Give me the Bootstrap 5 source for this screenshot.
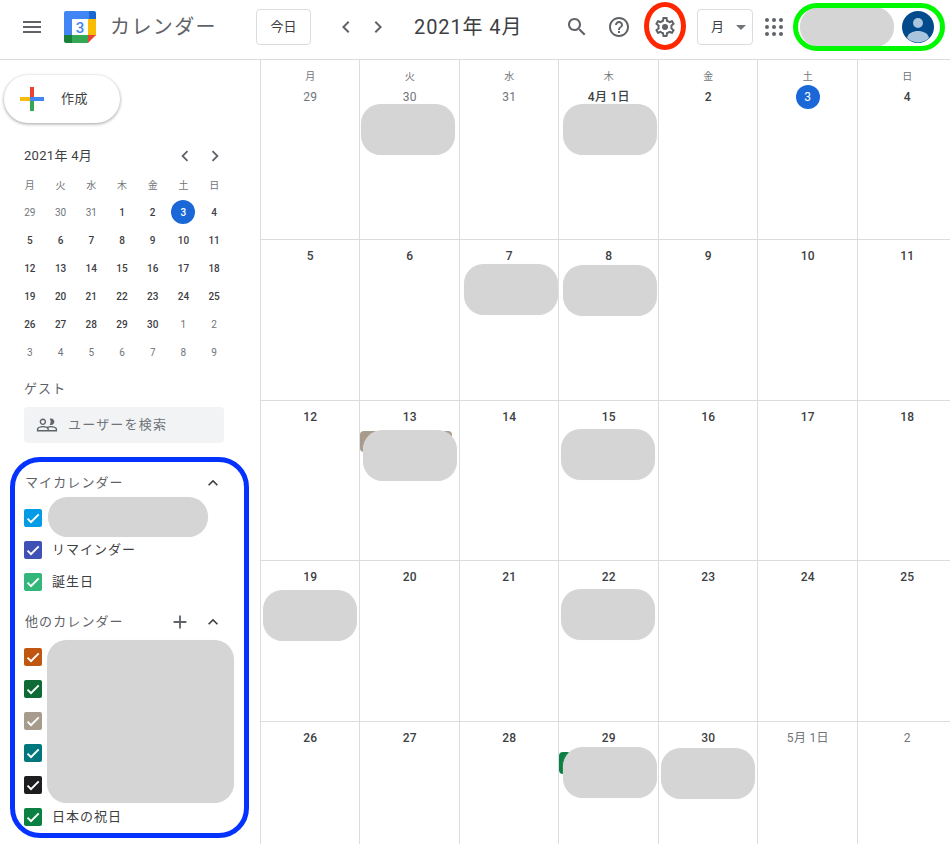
<!DOCTYPE html>
<html lang="ja">
<head>
    <meta charset="UTF-8">
    <meta name="viewport" content="width=device-width, initial-scale=1.0">
    <title>カレンダー</title>
    <link href="https://cdn.jsdelivr.net/npm/bootstrap@5.3.3/dist/css/bootstrap.min.css" rel="stylesheet">
    <style>
        html, body { height: 844px; overflow: hidden; }
        body { font-family: Roboto, "Noto Sans CJK JP", sans-serif; color: #3c4043; background: #fff; }
        .page-wrap { position: relative; width: 950px; height: 844px; overflow: hidden; }

        .top-bar { height: 60px; border-bottom: 1px solid #dadce0; padding-bottom: 5px; }
        .ico { fill: #5f6368; display: block; flex: none; }
        .menu-ico { margin-left: 20px; }
        .app-logo { margin-left: 20px; flex: none; }
        .app-title { font-size: 20px; line-height: 28px; color: #5f6368; width: 110px; margin-left: 14px; letter-spacing: 1.4px; white-space: nowrap; }
        .today-btn { width: 55px; height: 36px; margin-left: 36px; border: 1px solid #dadce0; border-radius: 4px; font-size: 13px; color: #3c4043; display: flex; align-items: center; justify-content: center; }
        .nav-pair { margin-left: 23px; gap: 8px; }
        .month-title { font-size: 20px; line-height: 28px; margin-left: 24px; width: 151px; white-space: nowrap; letter-spacing: .9px; }
        .help-ico { margin-left: 18px; }
        .gear-ico { margin-left: 22px; }
        .view-btn { width: 56px; height: 36px; margin-left: 20px; border: 1px solid #dadce0; border-radius: 4px; font-size: 13px; padding-left: 13px; }
        .caret-down { width: 0; height: 0; border-left: 5px solid transparent; border-right: 5px solid transparent; border-top: 5px solid #70757a; margin-left: 12px; }
        .dots-grid { width: 16px; display: grid; grid-template-columns: repeat(3, 4px); gap: 3px; margin-left: 12px; }
        .dots-grid i { width: 4px; height: 4px; background: #5f6368; border-radius: 50%; display: block; }
        .avatar-ico { position: absolute; left: 902px; top: 11px; }

        .side-pane { width: 259.6px; flex: none; }
        .create-btn { width: 116px; height: 48px; margin: 15px 0 0 4px; border-radius: 24px; background: #fff; box-shadow: 0 1px 3px rgba(60,64,67,.35), 0 1px 3px 1px rgba(60,64,67,.12); font-size: 13px; padding-left: 16px; gap: 17px; letter-spacing: .4px; }
        .mini-head { margin: 19px 0 0 24px; width: 202px; height: 28px; font-size: 13px; letter-spacing: .3px; }
        .mini-grid { margin: 2px 0 0 14.5px; width: 215px; display: grid; grid-template-columns: repeat(7, 1fr); grid-template-rows: 26px; grid-auto-rows: 28px; font-size: 10px; font-weight: 500; text-align: center; }
        .mini-grid span { display: flex; align-items: center; justify-content: center; }
        .mini-grid .wk { font-weight: 400; color: #70757a; }
        .mini-grid .dim { font-weight: 400; color: #70757a; }
        .day-dot { width: 24px; height: 24px; border-radius: 50%; background: #1a67d8; color: #fff; }
        .side-label { font-size: 13px; line-height: 20px; color: #5f6368; letter-spacing: 1.1px; }
        .guest-lbl { margin: 13px 0 0 24px; }
        .guest-box { width: 200px; height: 36px; margin: 8px 0 0 24px; background: #f1f3f4; border-radius: 4px; padding-left: 12px; gap: 10px; font-size: 13px; color: #70757a; letter-spacing: 1.2px; }
        .cal-head { height: 24px; margin-left: 25px; width: 198px; }
        .my-head { margin-top: 28px; }
        .other-head { margin-top: 12px; }
        .cal-list { margin-top: 7px; }
        .cal-row { height: 32px; margin-left: 24px; gap: 10px; font-size: 13px; color: #3c4043; letter-spacing: 1px; }
        .chk { width: 18px; height: 18px; border-radius: 2px; flex: none; display: flex; align-items: center; justify-content: center; }
        .chevron-up { fill: #3c4043; }
        .plus-ico { margin-right: 12px; }

        .month-grid { display: grid; grid-template-columns: repeat(7, 99.5px); grid-template-rows: 180px 161px 160px 161px 124px; width: 697px; flex: none; }
        .day-cell { border-left: 1px solid #dadce0; border-bottom: 1px solid #dadce0; text-align: center; font-size: 12px; font-weight: 500; color: #3c4043; padding: 4px 0 0 1px; letter-spacing: .3px; }
        .day-cell.first-week { padding-top: 8px; }
        .wk-name { font-size: 10px; font-weight: 400; line-height: 16px; color: #70757a; padding-top: 1px; }
        .day-num { line-height: 24px; height: 24px; display: flex; align-items: center; justify-content: center; }
        .day-num.dim { color: #70757a; font-weight: 400; }
        .day-num b { width: 24px; height: 24px; border-radius: 50%; background: #1a67d8; color: #fff; font-weight: 400; display: block; }

        /* redactions and annotations drawn on top of the screenshot */
        .blob { position: absolute; background: #d5d5d5; border-radius: 20px; box-shadow: 0 0 1px #e4e4e4; }
        .evt { position: absolute; border-radius: 4px; }
        .ring { position: absolute; background: transparent; }
    </style>
</head>
<body>
<div class="page-wrap">
    <header class="top-bar d-flex align-items-center">
        <svg class="ico menu-ico" width="24" height="24" viewBox="0 0 24 24"><path d="M3 18h18v-2H3v2zm0-5h18v-2H3v2zm0-7v2h18V6H3z"/></svg>
        <svg class="app-logo" width="32" height="32" viewBox="0 0 32 32">
            <path d="M8 0h17v8H8z" fill="#4285f4"/>
            <path d="M25 0h5a2 2 0 0 1 2 2v6h-7z" fill="#1967d2"/>
            <path d="M2 0h6v25H0V2a2 2 0 0 1 2-2z" fill="#4285f4"/>
            <path d="M24 8h8v17h-8z" fill="#fbbc04"/>
            <path d="M8 24h16v8H8z" fill="#34a853"/>
            <path d="M0 24h8v8H2a2 2 0 0 1-2-2z" fill="#188038"/>
            <path d="M24 24h8l-8 8z" fill="#ea4335"/>
            <path d="M8 8h16v16H8z" fill="#fff"/>
            <text x="16" y="21.5" text-anchor="middle" font-family="Roboto, sans-serif" font-size="15" font-weight="500" fill="#4285f4">3</text>
        </svg>
        <div class="app-title">カレンダー</div>
        <div class="today-btn">今日</div>
        <div class="nav-pair d-flex">
            <svg class="ico" width="24" height="24" viewBox="0 0 24 24"><path d="M15.41 7.41 14 6l-6 6 6 6 1.41-1.41L10.83 12z"/></svg>
            <svg class="ico" width="24" height="24" viewBox="0 0 24 24"><path d="M8.59 16.59 10 18l6-6-6-6-1.41 1.41L13.17 12z"/></svg>
        </div>
        <div class="month-title">2021年 4月</div>
        <svg class="ico" width="24" height="24" viewBox="0 0 24 24"><path d="M15.5 14h-.79l-.28-.27C15.41 12.59 16 11.11 16 9.5 16 5.91 13.09 3 9.5 3S3 5.91 3 9.5 5.91 16 9.5 16c1.61 0 3.09-.59 4.23-1.57l.27.28v.79l5 4.99L20.49 19l-4.99-5zm-6 0C7.01 14 5 11.99 5 9.5S7.01 5 9.5 5 14 7.01 14 9.5 11.99 14 9.5 14z"/></svg>
        <svg class="ico help-ico" width="24" height="24" viewBox="0 0 24 24"><path d="M11 18h2v-2h-2v2zm1-16C6.48 2 2 6.48 2 12s4.48 10 10 10 10-4.48 10-10S17.52 2 12 2zm0 18c-4.41 0-8-3.59-8-8s3.59-8 8-8 8 3.59 8 8-3.59 8-8 8zm0-14c-2.21 0-4 1.79-4 4h2c0-1.1.9-2 2-2s2 .9 2 2c0 2-3 1.75-3 5h2c0-2.25 3-2.5 3-5 0-2.21-1.79-4-4-4z"/></svg>
        <svg class="ico gear-ico" width="24" height="24" viewBox="0 0 24 24"><path d="M19.43 12.98c.04-.32.07-.64.07-.98 0-.34-.03-.66-.07-.98l2.11-1.65c.19-.15.24-.42.12-.64l-2-3.46c-.09-.16-.26-.25-.44-.25-.06 0-.12.01-.17.03l-2.49 1c-.52-.4-1.08-.73-1.69-.98l-.38-2.65C14.46 2.18 14.25 2 14 2h-4c-.25 0-.46.18-.49.42l-.38 2.65c-.61.25-1.17.59-1.69.98l-2.49-1c-.06-.02-.12-.03-.18-.03-.17 0-.34.09-.43.25l-2 3.46c-.13.22-.07.49.12.64l2.11 1.65c-.04.32-.07.65-.07.98 0 .33.03.66.07.98l-2.11 1.65c-.19.15-.24.42-.12.64l2 3.46c.09.16.26.25.44.25.06 0 .12-.01.17-.03l2.49-1c.52.4 1.08.73 1.69.98l.38 2.65c.03.24.24.42.49.42h4c.25 0 .46-.18.49-.42l.38-2.65c.61-.25 1.17-.59 1.69-.98l2.49 1c.06.02.12.03.18.03.17 0 .34-.09.43-.25l2-3.46c.12-.22.07-.49-.12-.64l-2.11-1.65zm-1.98-1.71c.04.31.05.52.05.73 0 .21-.02.43-.05.73l-.14 1.13.89.7 1.08.84-.7 1.21-1.27-.51-1.04-.42-.9.68c-.43.32-.84.56-1.25.73l-1.06.43-.16 1.13-.2 1.35h-1.4l-.19-1.35-.16-1.13-1.06-.43c-.43-.18-.83-.41-1.23-.71l-.91-.7-1.06.43-1.27.51-.7-1.21 1.08-.84.89-.7-.14-1.13c-.03-.31-.05-.54-.05-.74s.02-.43.05-.73l.14-1.13-.89-.7-1.08-.84.7-1.21 1.27.51 1.04.42.9-.68c.43-.32.84-.56 1.25-.73l1.06-.43.16-1.13.2-1.35h1.39l.19 1.35.16 1.13 1.06.43c.43.18.83.41 1.23.71l.91.7 1.06-.43 1.27-.51.7 1.21-1.07.85-.89.7.14 1.13z"/><circle cx="12" cy="12" r="3"/></svg>
        <div class="view-btn d-flex align-items-center">月<span class="caret-down"></span></div>
        <div class="dots-grid"><i></i><i></i><i></i><i></i><i></i><i></i><i></i><i></i><i></i></div>
    </header>

    <div class="d-flex">
        <aside class="side-pane">
            <div class="create-btn d-flex align-items-center">
                <svg width="24" height="24" viewBox="0 0 24 24" class="flex-none">
                    <path d="M10 0h4v10h-4z" fill="#ea4335"/>
                    <path d="M14 10h10v4H14z" fill="#4285f4"/>
                    <path d="M10 14h4v10h-4z" fill="#34a853"/>
                    <path d="M0 10h10v4H0z" fill="#fbbc04"/>
                    <path d="M10 10h4v4h-4z" fill="#4285f4"/>
                </svg>
                <span>作成</span>
            </div>
            <div class="mini-head d-flex align-items-center justify-content-between">
                <span>2021年 4月</span>
                <span class="d-flex gap-2">
                    <svg class="ico" width="22" height="22" viewBox="0 0 24 24"><path d="M15.41 7.41 14 6l-6 6 6 6 1.41-1.41L10.83 12z"/></svg>
                    <svg class="ico" width="22" height="22" viewBox="0 0 24 24"><path d="M8.59 16.59 10 18l6-6-6-6-1.41 1.41L13.17 12z"/></svg>
                </span>
            </div>
            <div class="mini-grid" id="mini-grid"></div>
            <div class="side-label guest-lbl">ゲスト</div>
            <div class="guest-box d-flex align-items-center">
                <svg class="ico" width="22" height="22" viewBox="0 0 24 24"><path d="M16.5 13c-1.2 0-3.07.34-4.5 1-1.43-.67-3.3-1-4.5-1C5.33 13 1 14.08 1 16.25V19h22v-2.75c0-2.17-4.33-3.25-6.5-3.25zm-4 4.5h-10v-1.25c0-.54 2.56-1.75 5-1.75s5 1.21 5 1.75v1.25zm9 0H14v-1.25c0-.46-.2-.86-.52-1.22.88-.3 1.96-.53 3.02-.53 2.44 0 5 1.21 5 1.75v1.25zM7.5 12c1.93 0 3.5-1.57 3.5-3.5S9.43 5 7.5 5 4 6.57 4 8.5 5.57 12 7.5 12zm0-5.5c1.1 0 2 .9 2 2s-.9 2-2 2-2-.9-2-2 .9-2 2-2zm9 5.5c1.93 0 3.5-1.57 3.5-3.5S18.43 5 16.5 5c-.53 0-1.04.12-1.5.34.63.89 1 1.96 1 3.16s-.37 2.27-1 3.16c.46.22.97.34 1.5.34z"/></svg>
                <span>ユーザーを検索</span>
            </div>

            <div class="cal-head my-head d-flex align-items-center justify-content-between side-label">
                <span>マイカレンダー</span>
                <svg class="ico chevron-up" width="20" height="20" viewBox="0 0 24 24"><path d="M12 8l-6 6 1.41 1.41L12 10.83l4.59 4.58L18 14z"/></svg>
            </div>
            <div class="cal-list" id="my-cals"></div>
            <div class="cal-head other-head d-flex align-items-center side-label">
                <span class="me-auto">他のカレンダー</span>
                <svg class="ico plus-ico" width="22" height="22" viewBox="0 0 24 24"><path d="M19 13h-6v6h-2v-6H5v-2h6V5h2v6h6v2z"/></svg>
                <svg class="ico chevron-up" width="20" height="20" viewBox="0 0 24 24"><path d="M12 8l-6 6 1.41 1.41L12 10.83l4.59 4.58L18 14z"/></svg>
            </div>
            <div class="cal-list" id="other-cals"></div>
        </aside>

        <main class="month-grid" id="month-grid"></main>
    </div>

    <svg class="avatar-ico" width="32" height="32" viewBox="0 0 32 32">
        <circle cx="16" cy="16" r="16" fill="#024a8c"/>
        <circle cx="16" cy="12" r="5" fill="#a9c4dc"/>
        <path d="M5 27c1-5 6-7 11-7s10 2 11 7a16 16 0 0 1-22 0z" fill="#a9c4dc"/>
    </svg>

    <div class="evt" style="left:360px;top:431px;width:92px;height:21px;background:#a79b8e"></div>
    <div class="evt" style="left:559px;top:752px;width:12px;height:22px;background:#0b8043"></div>

    <div class="blob" style="left:361px;top:104px;width:94px;height:51px"></div>
    <div class="blob" style="left:563px;top:104px;width:94px;height:51px"></div>
    <div class="blob" style="left:464px;top:264px;width:94px;height:51px"></div>
    <div class="blob" style="left:563px;top:265px;width:94px;height:51px"></div>
    <div class="blob" style="left:363px;top:430px;width:94px;height:51px"></div>
    <div class="blob" style="left:561px;top:429px;width:94px;height:51px"></div>
    <div class="blob" style="left:263px;top:590px;width:94px;height:51px"></div>
    <div class="blob" style="left:561px;top:589px;width:94px;height:51px"></div>
    <div class="blob" style="left:563px;top:747px;width:94px;height:51px"></div>
    <div class="blob" style="left:661px;top:748px;width:94px;height:51px"></div>
    <div class="blob" style="left:48px;top:497px;width:160px;height:40px"></div>
    <div class="blob" style="left:47px;top:640px;width:187px;height:163px"></div>
    <div class="blob" style="left:800px;top:7px;width:94px;height:40px"></div>

    <div class="ring" style="left:644px;top:2px;width:42px;height:48px;border:5px solid #ff2600;border-radius:50%"></div>
    <div class="ring" style="left:793px;top:3px;width:152px;height:48px;border:5px solid #00f900;border-radius:24px"></div>
    <div class="ring" style="left:10px;top:457px;width:239px;height:381px;border:5px solid #0433ff;border-radius:30px"></div>
</div>

<script>
    const wk = ["月", "火", "水", "木", "金", "土", "日"];
    const check = '<svg width="16" height="16" viewBox="0 0 24 24"><path d="M9 16.2 4.8 12l-2 2L9 20.2 21.6 7.6l-2-2z" fill="#fff"/></svg>';

    // mini month, Mar 29 to May 9
    const mini = document.getElementById("mini-grid");
    let html = wk.map(w => `<span class="wk">${w}</span>`).join("");
    const days = [29, 30, 31];
    for (let d = 1; d <= 30; d++) days.push(d);
    for (let d = 1; d <= 9; d++) days.push(d);
    days.forEach((d, i) => {
        const dim = i < 3 || i > 32;
        if (i === 5) html += `<span><span class="day-dot">${d}</span></span>`;
        else html += `<span class="${dim ? "dim" : ""}">${d}</span>`;
    });
    mini.innerHTML = html;

    // main month, five weeks
    const labels = [];
    for (let i = 0; i < 35; i++) labels.push(days[i]);
    labels[3] = "4月 1日";
    labels[33] = "5月 1日";
    document.getElementById("month-grid").innerHTML = labels.map((d, i) => {
        const dim = i < 3 || i > 32;
        const num = i === 5 ? `<b>${d}</b>` : d;
        const head = i < 7 ? `<div class="wk-name">${wk[i]}</div>` : "";
        return `<div class="day-cell ${i < 7 ? "first-week" : ""}">${head}<div class="day-num ${dim ? "dim" : ""}">${num}</div></div>`;
    }).join("");

    function calRows(id, rows) {
        document.getElementById(id).innerHTML = rows.map(r =>
            `<div class="cal-row d-flex align-items-center"><span class="chk" style="background:${r[0]}">${check}</span><span>${r[1]}</span></div>`
        ).join("");
    }
    calRows("my-cals", [["#039be5", ""], ["#3f51b5", "リマインダー"], ["#33b679", "誕生日"]]);
    calRows("other-cals", [["#c0560f", ""], ["#0f6b36", ""], ["#a79b8e", ""], ["#00777c", ""], ["#1d1d1f", ""], ["#0b8043", "日本の祝日"]]);
</script>
</body>
</html>
